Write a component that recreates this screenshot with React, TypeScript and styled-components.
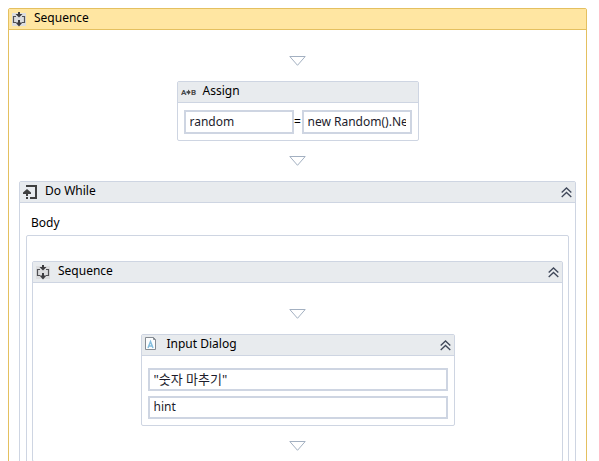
import React from "react";
import styled, { createGlobalStyle } from "styled-components";

const LINE = "#ced5e2";
const FONT = '"Noto Sans", "Open Sans", "Noto Sans CJK KR", sans-serif';

const GlobalStyle = createGlobalStyle`
  *, *::before, *::after { box-sizing: border-box; }
  body {
    margin: 0;
    overflow: hidden;
    background: #ffffff;
    color: #000000;
    font: 12px/16px ${FONT};
  }
`;

const Canvas = styled.main`
  padding: 8px 12px 8px 8px;
`;

const Card = styled.section<{ $selected?: boolean; $width?: number }>`
  width: ${(p) => (p.$width ? `${p.$width}px` : "100%")};
  max-width: 100%;
  border: 1px solid ${(p) => (p.$selected ? "#e4c060" : LINE)};
  border-radius: 2px;
  background: #ffffff;
`;

const CardHeader = styled.header<{ $selected?: boolean }>`
  display: flex;
  align-items: center;
  gap: 6px;
  height: 21px;
  padding: 0 3px;
  border-bottom: 1px solid ${(p) => (p.$selected ? "#e4c060" : LINE)};
  background: ${(p) => (p.$selected ? "#ffe6a2" : "#e8ebee")};

  > svg {
    flex: none;
  }
`;

const Title = styled.h2`
  flex: 1;
  margin: 0;
  padding-bottom: 2px;
  font: inherit;
`;

const CollapseButton = styled.button`
  display: flex;
  padding: 0;
  border: 0;
  background: none;
  cursor: pointer;
`;

const Flow = styled.div`
  display: flex;
  flex-direction: column;
  align-items: center;
  gap: 15px;
  padding: 26px 10px 10px;
`;

const AssignForm = styled.div`
  display: flex;
  align-items: center;
  padding: 7px 6px 6px;
`;

const Equals = styled.span`
  flex: none;
  width: 8px;
  text-align: center;
`;

const DialogForm = styled.div`
  display: flex;
  flex-direction: column;
  gap: 5px;
  padding: 12px 6px 6px;
`;

const Field = styled.input<{ $fontSize?: number }>`
  width: 100%;
  min-width: 0;
  height: 24px;
  padding: 0 4px 2px;
  border: 2px solid ${LINE};
  border-radius: 0;
  outline: 0;
  background: #ffffff;
  color: #1c1c2c;
  font: ${(p) => p.$fontSize ?? 12}px/16px ${FONT};
`;

const DialogField = styled(Field)`
  height: 23px;
`;

const LoopBody = styled.div`
  padding: 12px 6px 6px;
`;

const BodyLabel = styled.h3`
  margin: 0 0 4px;
  padding-left: 5px;
  font: inherit;
`;

const BodyFrame = styled.div`
  padding: 25px 5px 10px;
  border: 1px solid ${LINE};
  border-radius: 2px;
`;

const Connector = () => (
  <svg width="17" height="10" viewBox="0 0 17 10" fill="none" aria-hidden="true">
    <path d="M.8 .5H16.200L8.500 9.300Z" fill="#fff" stroke="#a3b0c1" />
  </svg>
);

const SequenceIcon = () => (
  <svg width="16" height="16" viewBox="0 0 16 16" fill="none" aria-hidden="true">
    <path d="M0 2H14V15H0Z" fill="#dcdddf" />
    <path d="M4 5.500H1.500V11.500H4M10 5.500H12.500V11.500H10" stroke="#505054" strokeWidth="1.200" />
    <path d="M6 1H8V3H10.500L7 6.500L3.500 3H6ZM6 9H8V11.500H10.500L7 15.500L3.500 11.500H6Z" fill="#3c3c40" />
  </svg>
);

const AssignIcon = () => (
  <svg width="16" height="16" viewBox="0 0 16 16" aria-hidden="true">
    <g fill="#484848" fontFamily="Roboto, sans-serif" fontSize="8" fontWeight="700">
      <text x="0" y="11">A</text>
      <text x="10" y="11">B</text>
    </g>
    <path d="M5.500 7.300H7V5.500L9.800 8.200L7 11V9.200H5.500Z" fill="#484848" />
  </svg>
);

const LoopIcon = () => (
  <svg width="16" height="16" viewBox="0 0 16 16" fill="none" aria-hidden="true">
    <path d="M3 2H13V14H7" stroke="#404040" strokeWidth="2" />
    <path d="M3 13H5V15H3Z" fill="#404040" />
    <path d="M4 5L8 8.500V10H5V12H3V10H0V8.500Z" fill="#404040" />
  </svg>
);

const DialogIcon = () => (
  <svg width="16" height="16" viewBox="0 1 16 16" fill="none" aria-hidden="true">
    <path d="M.5 1.500H8.500L10.500 3.500V13.500H.5Z" fill="#fcfdfe" stroke="#858b92" />
    <path d="M8.500 1.500V3.500H10.500" stroke="#858b92" />
    <path d="M3 12L5.500 5.500L8 12M4 10H7" stroke="#86bede" strokeWidth="1.500" />
  </svg>
);

const Collapse = ({ name }: { name: string }) => (
  <CollapseButton type="button" aria-label={`Collapse ${name}`}>
    <svg width="11" height="11" viewBox="0 0 11 11" fill="none" aria-hidden="true">
      <path d="M.7 5.500L5.500 1L10.300 5.500M.7 10L5.500 5.500L10.300 10" stroke="#3f4759" strokeWidth="1.300" />
    </svg>
  </CollapseButton>
);

interface ActivityProps {
  title: string;
  icon: React.ReactNode;
  children: React.ReactNode;
  selected?: boolean;
  collapsible?: boolean;
  width?: number;
}

const Activity = ({ title, icon, children, selected, collapsible, width }: ActivityProps) => (
  <Card $selected={selected} $width={width}>
    <CardHeader $selected={selected}>
      {icon}
      <Title>{title}</Title>
      {collapsible && <Collapse name={title} />}
    </CardHeader>
    {children}
  </Card>
);

export default function App() {
  return (
    <>
      <GlobalStyle />
      <Canvas>
        <Activity title="Sequence" icon={<SequenceIcon />} selected>
          <Flow>
            <Connector />
            <Activity title="Assign" icon={<AssignIcon />} width={242}>
              <AssignForm>
                <Field aria-label="To" defaultValue="random" />
                <Equals>=</Equals>
                <Field aria-label="Value" defaultValue="new Random().Next(1, 100)" />
              </AssignForm>
            </Activity>
            <Connector />
            <Activity title="Do While" icon={<LoopIcon />} collapsible>
              <LoopBody>
                <BodyLabel>Body</BodyLabel>
                <BodyFrame>
                  <Activity title="Sequence" icon={<SequenceIcon />} collapsible>
                    <Flow>
                      <Connector />
                      <Activity title="Input Dialog" icon={<DialogIcon />} width={314} collapsible>
                        <DialogForm>
                          <DialogField aria-label="Title" $fontSize={13} defaultValue={'"숫자 마추기"'} />
                          <DialogField aria-label="Label" defaultValue="hint" />
                        </DialogForm>
                      </Activity>
                      <Connector />
                    </Flow>
                  </Activity>
                </BodyFrame>
              </LoopBody>
            </Activity>
          </Flow>
        </Activity>
      </Canvas>
    </>
  );
}
